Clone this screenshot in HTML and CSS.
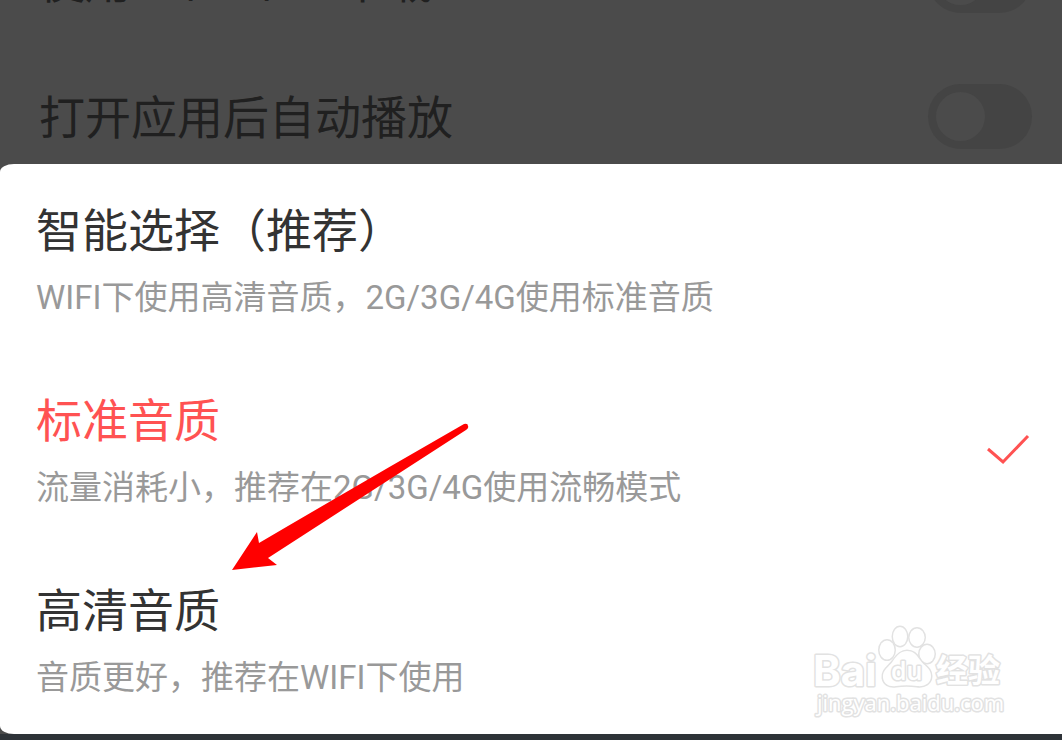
FILE: index.html
```html
<!DOCTYPE html>
<html lang="zh-CN">
<head>
<meta charset="utf-8">
<meta name="viewport" content="width=device-width, initial-scale=1">
<title>音质选择</title>
<link rel="stylesheet" href="styles.css">
</head>
<body>
<div class="screen">
  <main class="settings">
    <label class="setting"><span class="setting-name">使用2G/3G/4G下载</span><input class="switch" type="checkbox"></label>
    <label class="setting"><span class="setting-name">打开应用后自动播放</span><input class="switch" type="checkbox"></label>
  </main>
  <form class="sheet">
    <label class="option">
      <input class="option-radio" type="radio" name="quality">
      <span class="option-text"><span class="option-title">智能选择（推荐）</span><span class="option-desc">WIFI下使用高清音质，2G/3G/4G使用标准音质</span></span>
    </label>
    <label class="option">
      <input class="option-radio" type="radio" name="quality" checked>
      <span class="option-text"><span class="option-title">标准音质</span><span class="option-desc">流量消耗小，推荐在2G/3G/4G使用流畅模式</span></span>
      <svg class="check" viewBox="0 0 44 42" aria-hidden="true"><path d="M2 15 17 28 42 2"/></svg>
    </label>
    <label class="option">
      <input class="option-radio" type="radio" name="quality">
      <span class="option-text"><span class="option-title">高清音质</span><span class="option-desc">音质更好，推荐在WIFI下使用</span></span>
    </label>
  </form>
  <svg class="arrow" viewBox="0 0 240 150" aria-hidden="true"><path d="M1 148 26 110 28 121Q132 60 233 2Q237 1 237 4Q238 6 235 8Q136 72 37 136L46 143Z"/></svg>
  <svg class="watermark" viewBox="0 0 200 100" role="img" aria-label="Baidu 经验 jingyan.baidu.com">
    <g class="mark">
      <g class="mark-paw">
        <ellipse cx="74" cy="30" rx="7.5" ry="9.5"/>
        <ellipse cx="87" cy="16.500" rx="7" ry="9.5"/>
        <ellipse cx="104" cy="17.500" rx="7.5" ry="9"/>
        <ellipse cx="114" cy="34" rx="7.5" ry="9"/>
        <path d="M94 31C88 31 84 35 80 41C76 47 69 50 70 58C71 64 76 67 83 66C90 65 97 65 104 66C112 67 118 63 118 56C118 48 111 46 107 40C103 34 100 31 94 31Z"/>
      </g>
      <text class="mark-bai" x="0" y="66">Bai</text>
      <text class="mark-du" x="78" y="60">du</text>
      <text class="mark-cn" x="123" y="62">经验</text>
      <text class="mark-url" x="4" y="91">jingyan.baidu.com</text>
    </g>
  </svg>
</div>
</body>
</html>
```
FILE: styles.css
```css
* {
  box-sizing: border-box;
}

body {
  margin: 0;
  font-family: Roboto, "Noto Sans CJK SC", sans-serif;
}

.screen {
  position: relative;
  height: 100vh;
  overflow: hidden;
  background: #4b4b4b;
  border-bottom: 6px solid #2e3338;
}

.settings {
  margin-top: -88px;
  padding: 0 30px 0 39px;
  color: #202020;
  font-size: 46px;
}

.setting {
  display: flex;
  align-items: center;
  justify-content: space-between;
  height: 136px;
}

.setting-name {
  padding-bottom: 4px;
}

.switch {
  appearance: none;
  display: flex;
  width: 104px;
  height: 65px;
  margin: 0;
  padding: 8px;
  border-radius: 33px;
  background: #444;
}

.switch::before {
  content: "";
  width: 49px;
  height: 49px;
  border-radius: 50%;
  background: #4b4b4b;
}

.sheet {
  position: absolute;
  right: 0;
  bottom: 0;
  left: 0;
  border-radius: 14px 0 0 14px / 8px 0 0 8px;
  background: #fff;
}

.option {
  display: flex;
  align-items: center;
  justify-content: space-between;
  padding: 34px 32px 22px 36px;
}

.option-radio {
  position: absolute;
  opacity: 0;
}

.option-text {
  display: flex;
  flex-direction: column;
}

.option-title {
  color: #333;
  font-size: 46px;
  line-height: 66px;
}

.option-desc {
  color: #999;
  font-size: 33px;
  line-height: 68px;
}

.option-radio:checked + .option-text .option-title {
  color: #ff5252;
}

.check {
  width: 44px;
  height: 42px;
  fill: none;
  stroke: #ff5252;
  stroke-width: 3;
}

.arrow {
  position: absolute;
  top: 422px;
  left: 231px;
  width: 240px;
  height: 150px;
  fill: #f00;
}

.watermark {
  position: absolute;
  right: 49px;
  bottom: 14px;
  width: 200px;
  height: 100px;
}

.mark {
  fill: #fff;
  stroke: #e2e2e2;
  stroke-width: 3;
  stroke-linejoin: round;
  paint-order: stroke;
  font-family: "Open Sans", "Noto Sans CJK SC", sans-serif;
}

.mark-bai {
  font-family: Inter, sans-serif;
  font-size: 42px;
  font-weight: 700;
}

.mark-du {
  font-size: 25px;
  font-weight: 600;
}

.mark-cn {
  font-size: 32px;
  font-weight: 700;
}

.mark-url {
  font-size: 22px;
  font-weight: 400;
}
```
